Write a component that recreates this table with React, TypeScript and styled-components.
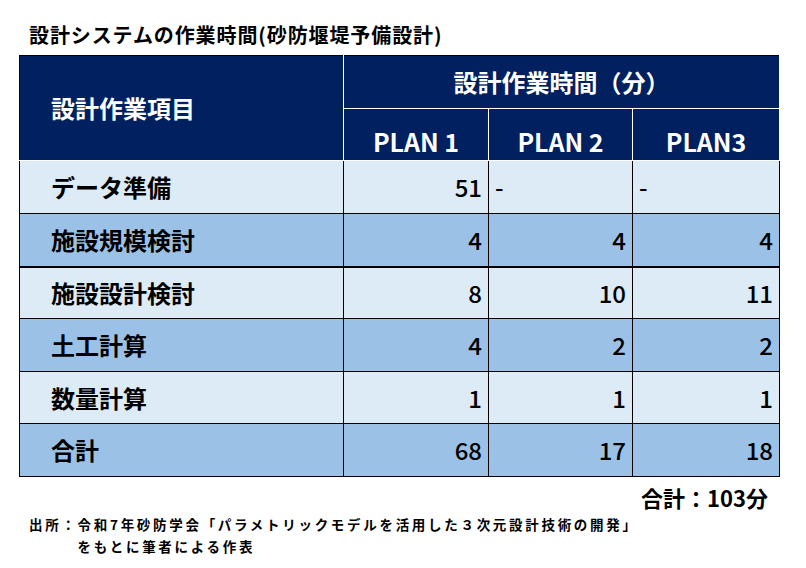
import React from "react";
import styled, { createGlobalStyle } from "styled-components";

const GlobalStyle = createGlobalStyle`
  html, body { margin: 0; padding: 0; background: #ffffff; }
  body { font-family: "Noto Sans CJK JP", "Noto Sans", sans-serif; color: #000; }
`;

const Page = styled.div`
  width: 806px;
  height: 568px;
  display: flex;
  flex-direction: column;
  box-sizing: border-box;
`;

const Title = styled.h1`
  margin: 0;
  padding: 21px 0 0 29px;
  font-size: 20px;
  line-height: 28px;
  font-weight: 700;
  letter-spacing: 0.9px;
`;

const Table = styled.table`
  margin: 6px 0 0 19px;
  width: 760px;
  border-collapse: collapse;
  table-layout: fixed;
  font-size: 24px;
`;

const HeadCell = styled.th<{ $plan?: boolean }>`
  background: #002060;
  color: #ffffff;
  font-weight: 700;
  border: 1px solid #ffffff;
  padding: ${(p) => (p.$plan ? "0 0 4px" : "0")};
  vertical-align: ${(p) => (p.$plan ? "bottom" : "middle")};
  text-align: center;
  line-height: 30px;
  font-size: ${(p) => (p.$plan ? "25px" : "24px")};
`;

const LabelHead = styled(HeadCell)`
  text-align: left;
  padding-left: 31px;
  border-left-color: #000;
  border-top-color: #000;
`;

const Row = styled.tr<{ $dark: boolean; $h: number; $thick?: boolean }>`
  height: ${(p) => p.$h}px;
  background: ${(p) => (p.$dark ? "#9BC2E6" : "#DDEBF7")};
  & > td {
    border-bottom-width: ${(p) => (p.$thick ? "2px" : "1px")};
  }
`;

const Label = styled.td`
  border: 1px solid #000;
  padding: 0 0 0 31px;
  font-weight: 700;
  line-height: 30px;
  vertical-align: middle;
`;

const Num = styled.td<{ $dash?: boolean }>`
  border: 1px solid #000;
  padding: ${(p) => (p.$dash ? "0 0 0 6px" : "0 6px 0 0")};
  text-align: ${(p) => (p.$dash ? "left" : "right")};
  font-weight: 500;
  line-height: 30px;
  vertical-align: middle;
`;

const Total = styled.div`
  margin: 5px 0 0 0;
  padding-right: 38px;
  text-align: right;
  font-size: 22px;
  font-weight: 700;
  line-height: 30px;
`;

const Note = styled.div`
  display: grid;
  grid-template-columns: auto 1fr;
  margin: 1px 0 0 29px;
  font-size: 13.5px;
  font-weight: 700;
  letter-spacing: 2.7px;
  line-height: 22px;
`;

const NoteLabel = styled.span``;
const NoteBody = styled.span``;

type Data = { label: string; v: (number | null)[]; thick?: boolean };

const rows: Data[] = [
  { label: "データ準備", v: [51, null, null] },
  { label: "施設規模検討", v: [4, 4, 4], thick: true },
  { label: "施設設計検討", v: [8, 10, 11] },
  { label: "土工計算", v: [4, 2, 2] },
  { label: "数量計算", v: [1, 1, 1] },
  { label: "合計", v: [68, 17, 18] },
];

const heights = [53, 53, 52, 53, 52, 53];

export default function App() {
  return (
    <>
      <GlobalStyle />
      <Page>
        <Title>設計システムの作業時間(砂防堰堤予備設計)</Title>
        <Table>
          <colgroup>
            <col style={{ width: 324 }} />
            <col style={{ width: 145 }} />
            <col style={{ width: 144 }} />
            <col style={{ width: 147 }} />
          </colgroup>
          <thead>
            <tr style={{ height: 53 }}>
              <LabelHead rowSpan={2}>設計作業項目</LabelHead>
              <HeadCell colSpan={3} style={{ borderTopColor: "#000" }}>
                設計作業時間（分）
              </HeadCell>
            </tr>
            <tr style={{ height: 52 }}>
              <HeadCell $plan>PLAN 1</HeadCell>
              <HeadCell $plan>PLAN 2</HeadCell>
              <HeadCell $plan>PLAN3</HeadCell>
            </tr>
          </thead>
          <tbody>
            {rows.map((r, i) => (
              <Row key={r.label} $dark={i % 2 === 1} $h={heights[i]} $thick={r.thick}>
                <Label>{r.label}</Label>
                {r.v.map((n, j) =>
                  n === null ? (
                    <Num key={j} $dash>
                      -
                    </Num>
                  ) : (
                    <Num key={j}>{n}</Num>
                  )
                )}
              </Row>
            ))}
          </tbody>
        </Table>
        <Total>合計：103分</Total>
        <Note>
          <NoteLabel>出所：</NoteLabel>
          <NoteBody>
            令和7年砂防学会「パラメトリックモデルを活用した３次元設計技術の開発」
            <br />
            をもとに筆者による作表
          </NoteBody>
        </Note>
      </Page>
    </>
  );
}
